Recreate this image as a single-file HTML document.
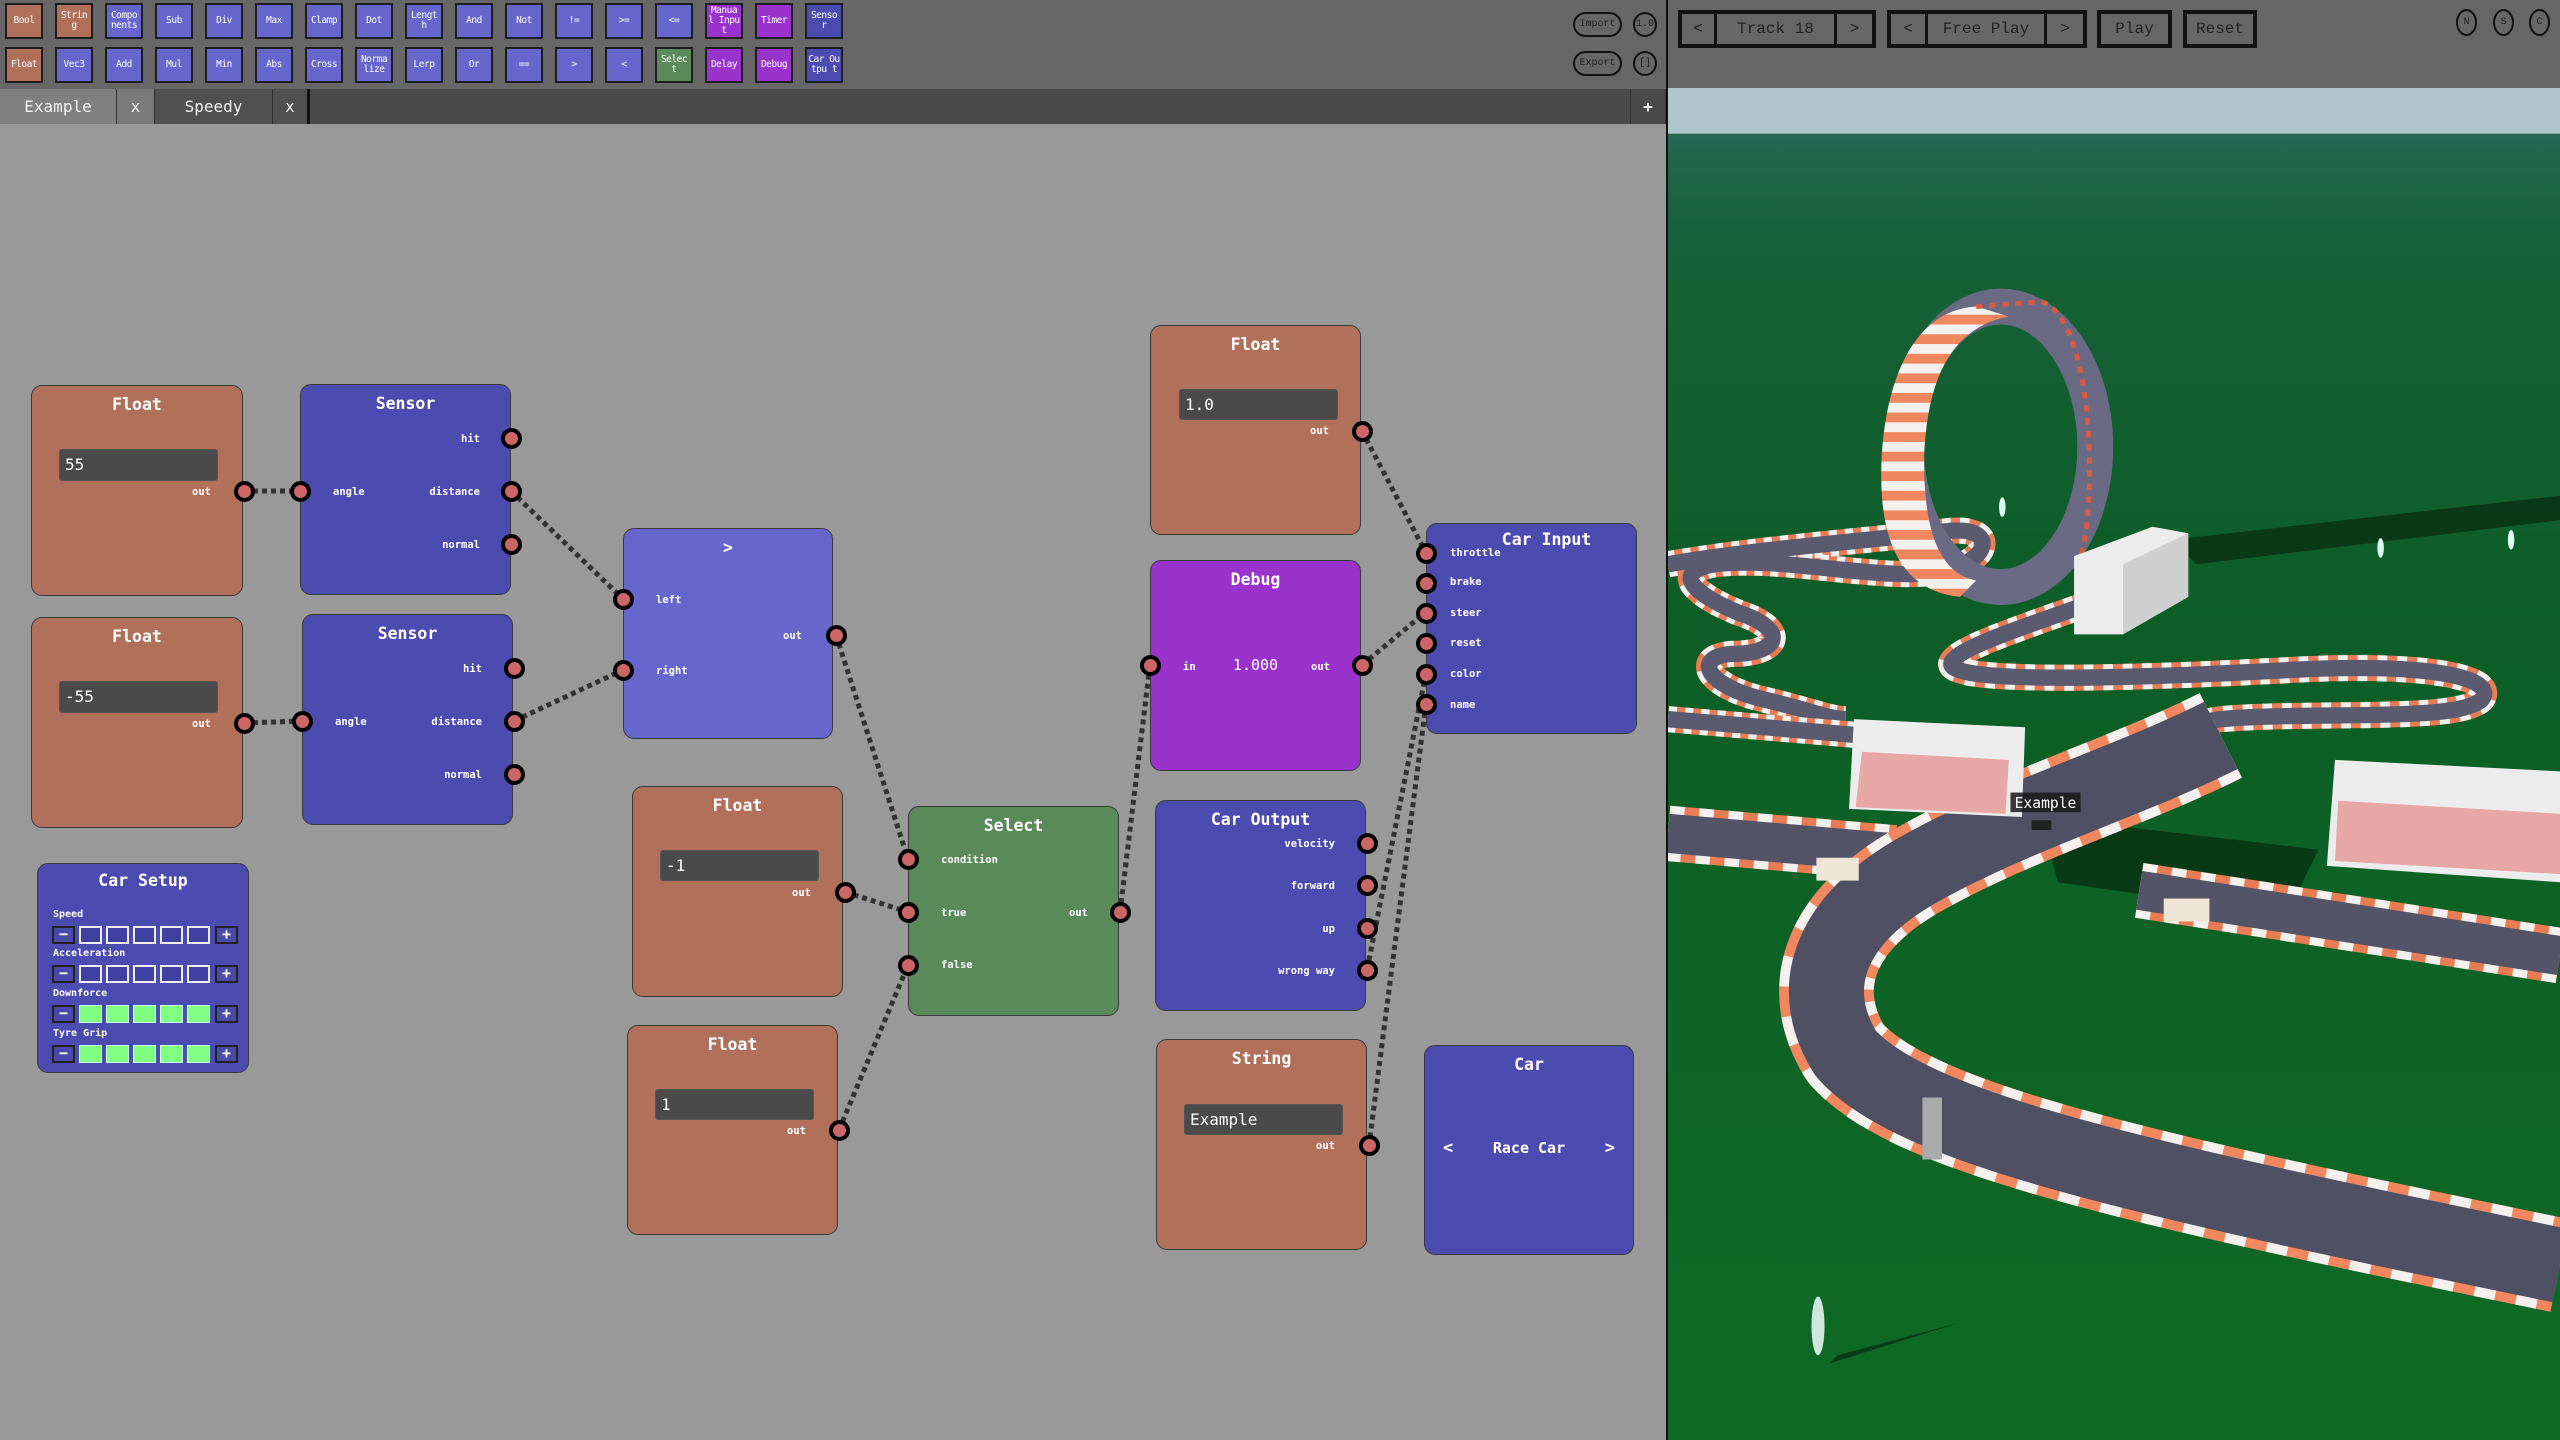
<!DOCTYPE html>
<html><head><meta charset="utf-8">
<style>
*{margin:0;padding:0;box-sizing:border-box}
body{width:2560px;height:1440px;overflow:hidden;background:#999;position:relative;font-family:"DejaVu Sans Mono","Liberation Mono",monospace;}
.a{position:absolute}
#tb{left:0;top:0;width:1666px;height:89px;background:#676767}
.btn{position:absolute;width:38px;height:36px;border:2px solid #1e1e1e;color:#fff;font-size:9.5px;line-height:10px;display:flex;align-items:center;justify-content:center;text-align:center;word-break:break-all;font-family:"DejaVu Sans Mono",monospace;letter-spacing:-0.5px}
.o{background:#b0705a}.b{background:#6666cc}.p{background:#9933cc}.d{background:#4b4bb0}.g{background:#5a8a5a}
#tabs{left:0;top:89px;width:1666px;height:35px;background:#4a4a4a}
.tab{position:absolute;top:0;height:35px;color:#f0f0f0;font-size:16px;display:flex;align-items:center;justify-content:center;border-right:1px solid #333}
.node{position:absolute;border:1.5px solid #3a3a3a;border-radius:11px;color:#fff}
.title{position:absolute;left:0;right:0;text-align:center;font-size:16.5px;font-weight:bold;top:9px}
.lbl{position:absolute;font-size:10.5px;font-weight:bold;line-height:12px}
.r{text-align:right}
.inp{position:absolute;background:#4a4a4a;border:1px solid #555;border-radius:3px;color:#fff;font-size:16px;padding-left:5px;line-height:29px}
.port{position:absolute;width:21px;height:21px;border-radius:50%;background:#cc6666;border:4px solid #000;margin:-10.5px 0 0 -10.5px}
.cs{position:absolute;width:23px;height:18px}
.cs.m,.cs.pl{border:2px solid #222;background:#4a4aaa;color:#fff;font-size:15px;font-weight:bold;line-height:13px;text-align:center}
.cs.e{border:2px solid #eee;background:#4040a0}
.cs.f{border:1px solid #cfe;background:#80ff80}
.cl{position:absolute;left:15px;font-size:10px;font-weight:bold}
#rt{left:1668px;top:0;width:892px;height:88px;background:#676767}
.grp{position:absolute;top:10px;height:38px;border:4px solid #111;display:flex;color:#222;font-family:"Liberation Mono",monospace;font-size:16px}
.grp div{display:flex;align-items:center;justify-content:center;border-right:3px solid #111}
.grp div:last-child{border-right:none}
.pill{position:absolute;border:2px solid #111;border-radius:14px;color:#222;font-size:10px;display:flex;align-items:center;justify-content:center;font-family:"Liberation Mono",monospace}
</style></head><body>

<div id="tb" class="a">
<div class="btn o" style="left:5px;top:3px">Bool</div>
<div class="btn o" style="left:55px;top:3px">Strin g</div>
<div class="btn b" style="left:105px;top:3px">Compo nents</div>
<div class="btn b" style="left:155px;top:3px">Sub</div>
<div class="btn b" style="left:205px;top:3px">Div</div>
<div class="btn b" style="left:255px;top:3px">Max</div>
<div class="btn b" style="left:305px;top:3px">Clamp</div>
<div class="btn b" style="left:355px;top:3px">Dot</div>
<div class="btn b" style="left:405px;top:3px">Lengt h</div>
<div class="btn b" style="left:455px;top:3px">And</div>
<div class="btn b" style="left:505px;top:3px">Not</div>
<div class="btn b" style="left:555px;top:3px">!=</div>
<div class="btn b" style="left:605px;top:3px">&gt;=</div>
<div class="btn b" style="left:655px;top:3px">&lt;=</div>
<div class="btn p" style="left:705px;top:3px">Manua l Input</div>
<div class="btn p" style="left:755px;top:3px">Timer</div>
<div class="btn d" style="left:805px;top:3px">Senso r</div>
<div class="btn o" style="left:5px;top:47px">Float</div>
<div class="btn b" style="left:55px;top:47px">Vec3</div>
<div class="btn b" style="left:105px;top:47px">Add</div>
<div class="btn b" style="left:155px;top:47px">Mul</div>
<div class="btn b" style="left:205px;top:47px">Min</div>
<div class="btn b" style="left:255px;top:47px">Abs</div>
<div class="btn b" style="left:305px;top:47px">Cross</div>
<div class="btn b" style="left:355px;top:47px">Norma lize</div>
<div class="btn b" style="left:405px;top:47px">Lerp</div>
<div class="btn b" style="left:455px;top:47px">Or</div>
<div class="btn b" style="left:505px;top:47px">==</div>
<div class="btn b" style="left:555px;top:47px">&gt;</div>
<div class="btn b" style="left:605px;top:47px">&lt;</div>
<div class="btn g" style="left:655px;top:47px">Selec t</div>
<div class="btn p" style="left:705px;top:47px">Delay</div>
<div class="btn p" style="left:755px;top:47px">Debug</div>
<div class="btn d" style="left:805px;top:47px">Car Outpu t</div>
<div class="pill" style="left:1573px;top:12px;width:49px;height:25px">Import</div>
<div class="pill" style="left:1633px;top:12px;width:24px;height:25px;border-radius:50%">1.0</div>
<div class="pill" style="left:1573px;top:51px;width:49px;height:25px">Export</div>
<div class="pill" style="left:1633px;top:51px;width:24px;height:25px;border-radius:50%">[]</div>
</div>

<div id="tabs" class="a">
<div class="tab" style="left:0;width:117px;background:#808080">Example</div>
<div class="tab" style="left:117px;width:38px;background:#7a7a7a">x</div>
<div class="tab" style="left:155px;width:118px;background:#505050">Speedy</div>
<div class="tab" style="left:273px;width:37px;background:#505050;border-right:3px solid #111">x</div>
<div class="tab" style="left:1630px;width:36px;background:#4a4a4a;border-left:1px solid #333;font-weight:bold">+</div>
</div>
<div class="a" style="left:1666px;top:0;width:2px;height:1440px;background:#111"></div>

<svg class="a" style="left:0;top:0" width="1666" height="1440">
<g stroke="#333" stroke-width="5" stroke-dasharray="5 4" fill="none">
<line x1="244" y1="491" x2="300" y2="491"/>
<line x1="244" y1="723" x2="302" y2="721"/>
<line x1="511" y1="491" x2="623" y2="599"/>
<line x1="514" y1="721" x2="623" y2="670"/>
<line x1="836" y1="635" x2="908" y2="859"/>
<line x1="845" y1="892" x2="908" y2="912"/>
<line x1="839" y1="1130" x2="908" y2="965"/>
<line x1="1120" y1="912" x2="1150" y2="665"/>
<line x1="1362" y1="431" x2="1426" y2="553"/>
<line x1="1362" y1="665" x2="1426" y2="612"/>
<line x1="1426" y1="673" x2="1367" y2="970"/>
<line x1="1426" y1="704" x2="1369" y2="1145"/>
</g></svg>

<div class="node o" style="left:31px;top:385px;width:212px;height:211px">
<div class="title">Float</div>
<div class="inp" style="left:27px;top:63px;width:159px;height:32px">55</div>
<div class="lbl r" style="right:31px;top:100px">out</div></div>
<div class="port" style="left:244px;top:491px"></div>
<div class="node d" style="left:300px;top:384px;width:211px;height:211px">
<div class="title">Sensor</div>
<div class="lbl r" style="right:30px;top:48px">hit</div>
<div class="lbl" style="left:32px;top:101px">angle</div>
<div class="lbl r" style="right:30px;top:101px">distance</div>
<div class="lbl r" style="right:30px;top:154px">normal</div></div>
<div class="port" style="left:511px;top:438px"></div>
<div class="port" style="left:511px;top:491px"></div>
<div class="port" style="left:511px;top:544px"></div>
<div class="port" style="left:300px;top:491px"></div>
<div class="node o" style="left:31px;top:617px;width:212px;height:211px">
<div class="title">Float</div>
<div class="inp" style="left:27px;top:63px;width:159px;height:32px">-55</div>
<div class="lbl r" style="right:31px;top:100px">out</div></div>
<div class="port" style="left:244px;top:723px"></div>
<div class="node d" style="left:302px;top:614px;width:211px;height:211px">
<div class="title">Sensor</div>
<div class="lbl r" style="right:30px;top:48px">hit</div>
<div class="lbl" style="left:32px;top:101px">angle</div>
<div class="lbl r" style="right:30px;top:101px">distance</div>
<div class="lbl r" style="right:30px;top:154px">normal</div></div>
<div class="port" style="left:514px;top:668px"></div>
<div class="port" style="left:514px;top:721px"></div>
<div class="port" style="left:514px;top:774px"></div>
<div class="port" style="left:302px;top:721px"></div>
<div class="node d" style="left:37px;top:863px;width:212px;height:210px">
<div class="title" style="top:7px">Car Setup</div>
<div class="cl" style="top:45px">Speed</div>
<div class="cl" style="top:84px">Acceleration</div>
<div class="cl" style="top:124px">Downforce</div>
<div class="cl" style="top:164px">Tyre Grip</div>
</div>
<div class="a" style="left:0;top:0">
<div class="cs m" style="left:52px;top:926px">−</div><div class="cs e" style="left:79px;top:926px"></div><div class="cs e" style="left:106px;top:926px"></div><div class="cs e" style="left:133px;top:926px"></div><div class="cs e" style="left:160px;top:926px"></div><div class="cs e" style="left:187px;top:926px"></div><div class="cs pl" style="left:215px;top:926px">+</div>
<div class="cs m" style="left:52px;top:965px">−</div><div class="cs e" style="left:79px;top:965px"></div><div class="cs e" style="left:106px;top:965px"></div><div class="cs e" style="left:133px;top:965px"></div><div class="cs e" style="left:160px;top:965px"></div><div class="cs e" style="left:187px;top:965px"></div><div class="cs pl" style="left:215px;top:965px">+</div>
<div class="cs m" style="left:52px;top:1005px">−</div><div class="cs f" style="left:79px;top:1005px"></div><div class="cs f" style="left:106px;top:1005px"></div><div class="cs f" style="left:133px;top:1005px"></div><div class="cs f" style="left:160px;top:1005px"></div><div class="cs f" style="left:187px;top:1005px"></div><div class="cs pl" style="left:215px;top:1005px">+</div>
<div class="cs m" style="left:52px;top:1045px">−</div><div class="cs f" style="left:79px;top:1045px"></div><div class="cs f" style="left:106px;top:1045px"></div><div class="cs f" style="left:133px;top:1045px"></div><div class="cs f" style="left:160px;top:1045px"></div><div class="cs f" style="left:187px;top:1045px"></div><div class="cs pl" style="left:215px;top:1045px">+</div>
</div>
<div class="node b" style="left:623px;top:528px;width:210px;height:211px">
<div class="title">&gt;</div>
<div class="lbl" style="left:32px;top:65px">left</div>
<div class="lbl r" style="right:30px;top:101px">out</div>
<div class="lbl" style="left:32px;top:136px">right</div></div>
<div class="port" style="left:623px;top:599px"></div>
<div class="port" style="left:623px;top:670px"></div>
<div class="port" style="left:836px;top:635px"></div>
<div class="node o" style="left:632px;top:786px;width:211px;height:211px">
<div class="title">Float</div>
<div class="inp" style="left:27px;top:63px;width:159px;height:31px">-1</div>
<div class="lbl r" style="right:31px;top:100px">out</div></div>
<div class="port" style="left:845px;top:892px"></div>
<div class="node o" style="left:627px;top:1025px;width:211px;height:210px">
<div class="title">Float</div>
<div class="inp" style="left:27px;top:63px;width:159px;height:31px">1</div>
<div class="lbl r" style="right:31px;top:99px">out</div></div>
<div class="port" style="left:839px;top:1130px"></div>
<div class="node g" style="left:908px;top:806px;width:211px;height:210px">
<div class="title">Select</div>
<div class="lbl" style="left:32px;top:47px">condition</div>
<div class="lbl" style="left:32px;top:100px">true</div>
<div class="lbl r" style="right:30px;top:100px">out</div>
<div class="lbl" style="left:32px;top:152px">false</div></div>
<div class="port" style="left:908px;top:859px"></div>
<div class="port" style="left:908px;top:912px"></div>
<div class="port" style="left:908px;top:965px"></div>
<div class="port" style="left:1120px;top:912px"></div>
<div class="node o" style="left:1150px;top:325px;width:211px;height:210px">
<div class="title">Float</div>
<div class="inp" style="left:28px;top:63px;width:159px;height:31px">1.0</div>
<div class="lbl r" style="right:31px;top:99px">out</div></div>
<div class="port" style="left:1362px;top:431px"></div>
<div class="node p" style="left:1150px;top:560px;width:211px;height:211px">
<div class="title">Debug</div>
<div class="lbl" style="left:32px;top:100px">in</div>
<div class="a" style="left:0;right:0;top:95px;text-align:center;font-size:15px">1.000</div>
<div class="lbl r" style="right:30px;top:100px">out</div></div>
<div class="port" style="left:1150px;top:665px"></div>
<div class="port" style="left:1362px;top:665px"></div>
<div class="node d" style="left:1155px;top:800px;width:211px;height:211px">
<div class="title">Car Output</div>
<div class="lbl r" style="right:30px;top:37px">velocity</div>
<div class="lbl r" style="right:30px;top:79px">forward</div>
<div class="lbl r" style="right:30px;top:122px">up</div>
<div class="lbl r" style="right:30px;top:164px">wrong way</div></div>
<div class="port" style="left:1367px;top:843px"></div>
<div class="port" style="left:1367px;top:885px"></div>
<div class="port" style="left:1367px;top:928px"></div>
<div class="port" style="left:1367px;top:970px"></div>
<div class="node o" style="left:1156px;top:1039px;width:211px;height:211px">
<div class="title">String</div>
<div class="inp" style="left:27px;top:64px;width:159px;height:31px">Example</div>
<div class="lbl r" style="right:31px;top:100px">out</div></div>
<div class="port" style="left:1369px;top:1145px"></div>
<div class="node d" style="left:1426px;top:523px;width:211px;height:211px">
<div class="title" style="top:6px;left:30px">Car Input</div>
<div class="lbl" style="left:23px;top:23px">throttle</div>
<div class="lbl" style="left:23px;top:52px">brake</div>
<div class="lbl" style="left:23px;top:83px">steer</div>
<div class="lbl" style="left:23px;top:113px">reset</div>
<div class="lbl" style="left:23px;top:144px">color</div>
<div class="lbl" style="left:23px;top:175px">name</div></div>
<div class="port" style="left:1426px;top:553px"></div>
<div class="port" style="left:1426px;top:583px"></div>
<div class="port" style="left:1426px;top:613px"></div>
<div class="port" style="left:1426px;top:643px"></div>
<div class="port" style="left:1426px;top:674px"></div>
<div class="port" style="left:1426px;top:704px"></div>
<div class="node d" style="left:1424px;top:1045px;width:210px;height:210px">
<div class="title">Car</div>
<div class="a" style="left:18px;top:92px;font-size:17px;font-weight:bold">&lt;</div>
<div class="a" style="left:0;right:0;top:93px;text-align:center;font-size:15px;font-weight:bold">Race Car</div>
<div class="a" style="right:18px;top:92px;font-size:17px;font-weight:bold">&gt;</div></div>

<div id="rt" class="a">
<div class="grp" style="left:10px;width:198px"><div style="width:35px">&lt;</div><div style="flex:1">Track 18</div><div style="width:35px">&gt;</div></div>
<div class="grp" style="left:219px;width:200px"><div style="width:37px">&lt;</div><div style="flex:1">Free Play</div><div style="width:36px">&gt;</div></div>
<div class="grp" style="left:429px;width:75px"><div style="flex:1">Play</div></div>
<div class="grp" style="left:515px;width:74px"><div style="flex:1">Reset</div></div>
<div class="pill" style="left:788px;top:9px;width:21px;height:27px;border-radius:50%">N</div>
<div class="pill" style="left:825px;top:9px;width:21px;height:27px;border-radius:50%">S</div>
<div class="pill" style="left:861px;top:9px;width:21px;height:27px;border-radius:50%">C</div>
</div>

<svg class="a" style="left:1668px;top:88px" width="892" height="1352" viewBox="1021 53 547 829" preserveAspectRatio="none">
<defs>
<linearGradient id="gr" x1="0" y1="0" x2="0" y2="1"><stop offset="0" stop-color="#2b6a5e"/><stop offset="0.12" stop-color="#176038"/><stop offset="0.4" stop-color="#0c5e26"/><stop offset="1" stop-color="#0f6a26"/></linearGradient>
<pattern id="hs" width="20" height="12" patternUnits="userSpaceOnUse"><rect width="20" height="12" fill="#f4f0ee"/><rect width="20" height="6" fill="#f0875f"/></pattern>
</defs>
<rect x="1021" y="53" width="547" height="829" fill="url(#gr)"/>
<rect x="1021" y="53" width="547" height="28" fill="#b1c5cd"/>
<g fill="#072a10" opacity="0.7">
<path d="M1330,330 L1568,303 L1568,318 L1345,345Z"/>
<path d="M1120,835 L1200,810 L1125,830Z"/>
<path d="M1250,500 L1420,520 L1400,560 L1260,540Z"/>
</g>
<g fill="none" stroke-linecap="butt" stroke-linejoin="round">
<g>
<path id="p1" d="M1021,345 C1080,335 1150,330 1190,325 C1225,320 1220,345 1185,350 C1150,355 1090,340 1050,345 C1020,350 1040,365 1065,375 C1095,385 1090,400 1060,400 C1035,402 1045,420 1080,428 C1110,435 1120,440 1130,440" stroke="#e87c55" stroke-width="16"/>
<path d="M1021,345 C1080,335 1150,330 1190,325 C1225,320 1220,345 1185,350 C1150,355 1090,340 1050,345 C1020,350 1040,365 1065,375 C1095,385 1090,400 1060,400 C1035,402 1045,420 1080,428 C1110,435 1120,440 1130,440" stroke="#f3f0ee" stroke-width="16" stroke-dasharray="5 5"/>
<path d="M1021,345 C1080,335 1150,330 1190,325 C1225,320 1220,345 1185,350 C1150,355 1090,340 1050,345 C1020,350 1040,365 1065,375 C1095,385 1090,400 1060,400 C1035,402 1045,420 1080,428 C1110,435 1120,440 1130,440" stroke="#5a5a70" stroke-width="10"/>
</g>
<path d="M1021,440 L1140,450" stroke="#e87c55" stroke-width="16"/>
<path d="M1021,440 L1140,450" stroke="#f3f0ee" stroke-width="16" stroke-dasharray="5 5"/>
<path d="M1021,440 L1140,450" stroke="#5a5a70" stroke-width="10"/>
<g>
<path d="M1305,360 C1250,380 1200,395 1195,405 C1190,415 1250,418 1400,410 C1490,405 1530,415 1520,428 C1505,442 1420,435 1360,440 C1320,445 1320,470 1290,480 C1260,490 1230,495 1200,500" stroke="#e87c55" stroke-width="16"/>
<path d="M1305,360 C1250,380 1200,395 1195,405 C1190,415 1250,418 1400,410 C1490,405 1530,415 1520,428 C1505,442 1420,435 1360,440 C1320,445 1320,470 1290,480 C1260,490 1230,495 1200,500" stroke="#f3f0ee" stroke-width="16" stroke-dasharray="6 6"/>
<path d="M1305,360 C1250,380 1200,395 1195,405 C1190,415 1250,418 1400,410 C1490,405 1530,415 1520,428 C1505,442 1420,435 1360,440 C1320,445 1320,470 1290,480 C1260,490 1230,495 1200,500" stroke="#5a5a70" stroke-width="10"/>
</g>
<path d="M1021,510 L1160,522 M1310,545 L1568,585" stroke="#e87c55" stroke-width="34"/>
<path d="M1021,510 L1160,522 M1310,545 L1568,585" stroke="#f3f0ee" stroke-width="34" stroke-dasharray="9 9"/>
<path d="M1021,510 L1160,522 M1310,545 L1568,585" stroke="#545468" stroke-width="24"/>
<path d="M1360,450 C1300,480 1230,500 1170,535 C1120,565 1105,605 1130,645 C1170,690 1300,720 1568,775" stroke="#f0875f" stroke-width="58"/>
<path d="M1360,450 C1300,480 1230,500 1170,535 C1120,565 1105,605 1130,645 C1170,690 1300,720 1568,775" stroke="#f3f0ee" stroke-width="58" stroke-dasharray="13 13"/>
<path d="M1360,450 C1300,480 1230,500 1170,535 C1120,565 1105,605 1130,645 C1170,690 1300,720 1568,775" stroke="#505064" stroke-width="46"/>
</g>
<rect x="1177" y="672" width="12" height="38" fill="#aaa"/>
<ellipse cx="1225" cy="273" rx="58" ry="86" fill="none" stroke="#6a6a84" stroke-width="22"/>
<path d="M1210,187 C1160,190 1150,260 1152,300 C1154,340 1170,362 1200,365 L1210,355 C1185,350 1178,320 1178,280 C1180,230 1195,200 1230,193Z" fill="url(#hs)"/>
<path d="M1210,187 L1250,184 C1285,195 1285,330 1270,350" fill="none" stroke="#d85a40" stroke-width="3" stroke-dasharray="4 4"/>
<path d="M1270,340 L1318,322 L1340,326 L1340,365 L1300,388 L1270,388Z" fill="#ececec"/>
<path d="M1300,388 L1340,365 L1340,326 L1300,345Z" fill="#cfcfcf"/>
<path d="M1135,440 L1240,445 L1238,500 L1132,495Z" fill="#ececec"/>
<path d="M1140,460 L1230,465 L1228,498 L1136,494Z" fill="#e8a7a7"/>
<path d="M1430,465 L1568,472 L1568,540 L1425,530Z" fill="#ececec"/>
<path d="M1432,490 L1568,498 L1568,535 L1430,527Z" fill="#e8a7a7"/>
<rect x="1112" y="525" width="26" height="14" fill="#eee5d5"/>
<rect x="1325" y="550" width="28" height="14" fill="#eee5d5"/>
<ellipse cx="1113" cy="812" rx="4" ry="18" fill="#cfe6dc"/>
<ellipse cx="1226" cy="310" rx="2" ry="6" fill="#dfe"/>
<ellipse cx="1458" cy="335" rx="2" ry="6" fill="#dfe"/>
<ellipse cx="1538" cy="330" rx="2" ry="6" fill="#dfe"/>
<rect x="1231" y="485" width="43" height="12" fill="#1a1a1a" opacity="0.85"/>
<text x="1252.5" y="494.5" text-anchor="middle" font-family="DejaVu Sans Mono,monospace" font-size="9" fill="#fff">Example</text>
<rect x="1244" y="502" width="12" height="6" fill="#222"/>
</svg>
</body></html>
